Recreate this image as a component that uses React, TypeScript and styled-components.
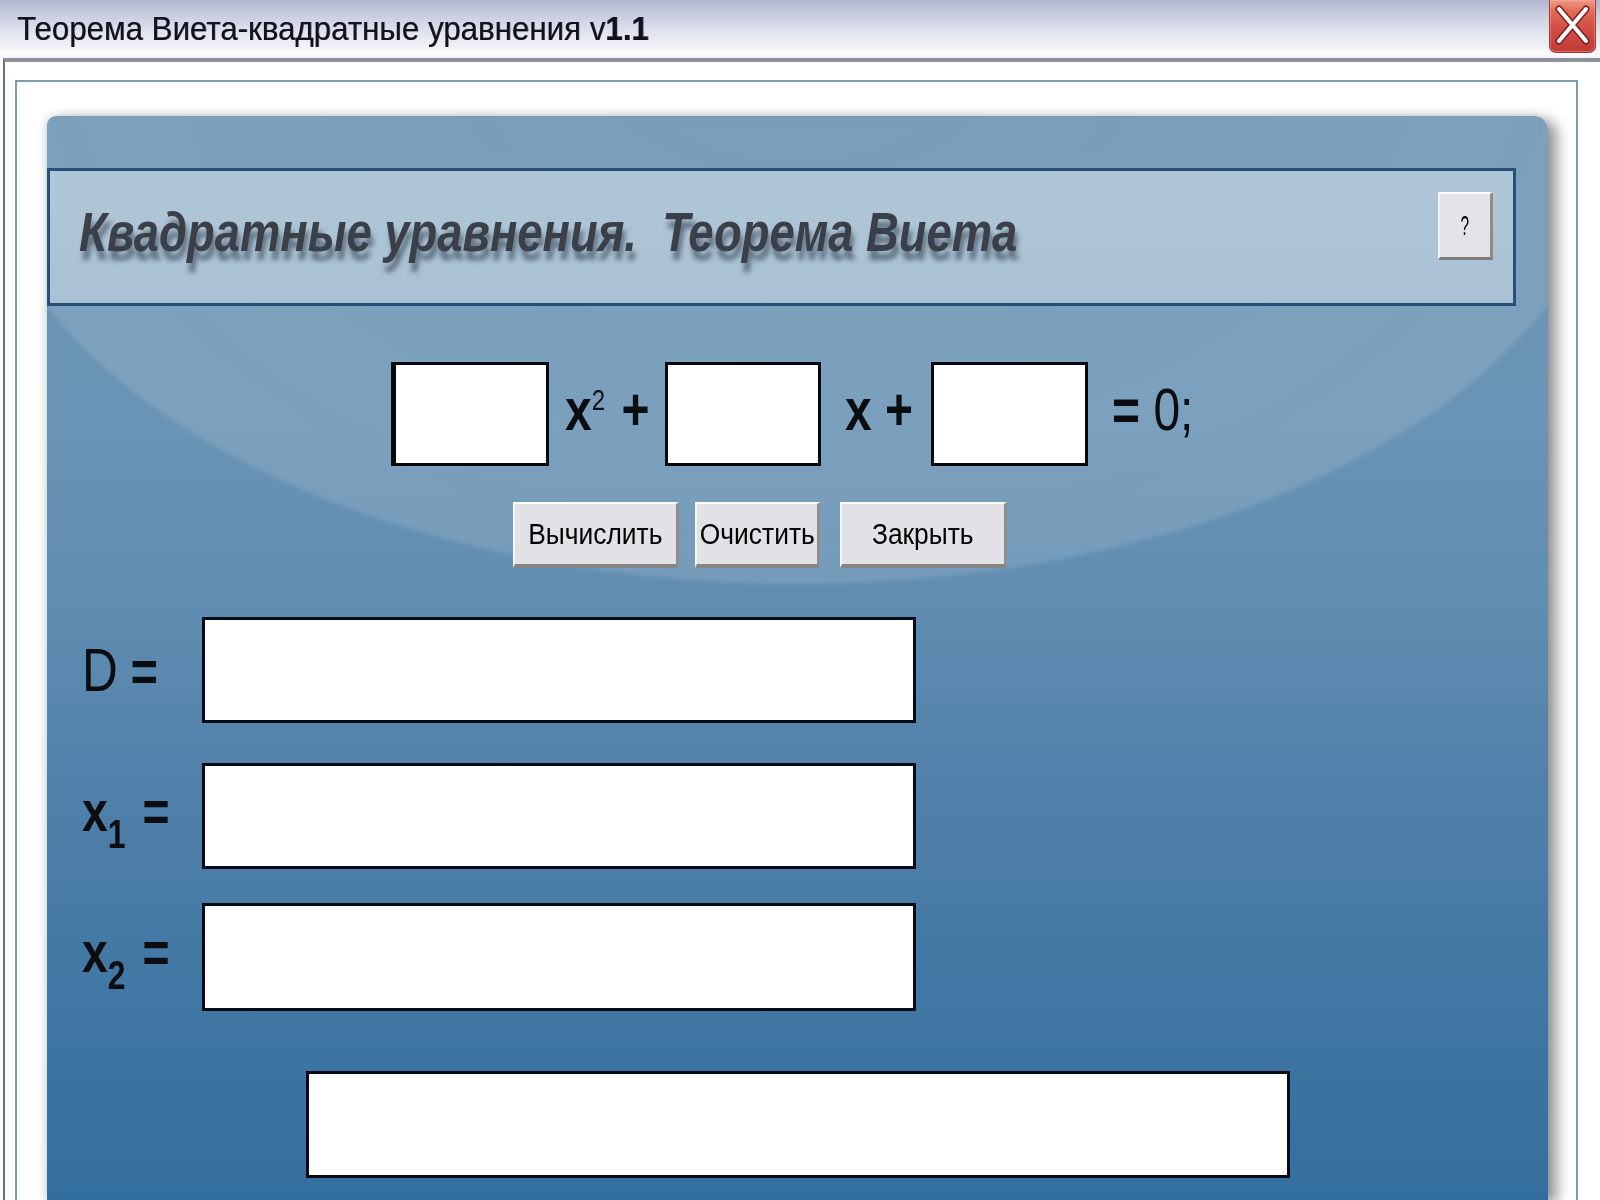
import { createGlobalStyle, styled } from "styled-components";

const GlobalStyle = createGlobalStyle`
  html, body {
    margin: 0;
    padding: 0;
    background: #ffffff;
  }
  body {
    font-family: "Liberation Sans", Arial, sans-serif;
  }
`;

function App() {
  return (
    <Window>
      <GlobalStyle />
      <TitleBar>
        <Caption>
          <Narrow $sx={0.92}>
            Теорема Виета-квадратные уравнения v<b>1.1</b>
          </Narrow>
        </Caption>
        <CloseButton>
          <svg width="45" height="52" viewBox="0 0 45 52">
            <path d="M9 9 L36 41 M36 9 L9 41" stroke="#7c2420" strokeWidth="7" strokeLinecap="round" />
            <path d="M9 9 L36 41 M36 9 L9 41" stroke="#ffffff" strokeWidth="4" strokeLinecap="round" />
          </svg>
        </CloseButton>
      </TitleBar>
      <Body>
        <Frame>
          <Panel>
            <Header>
              <HeaderTitle>
                <Narrow $sx={0.825}>Квадратные уравнения.  Теорема Виета</Narrow>
              </HeaderTitle>
              <HelpButton>
                <Narrow $sx={0.55} $origin="center">?</Narrow>
              </HelpButton>
            </Header>

            <EqRow>
              <CoefBox $w={158} $left={5} />
              <Term $w={116} $pl={16}>
                <Narrow $sx={0.8}>
                  x<Sup>2</Sup> <Plus>+</Plus>
                </Narrow>
              </Term>
              <CoefBox $w={156} />
              <Term $w={110} $pl={24}>
                <Narrow $sx={0.8}>x +</Narrow>
              </Term>
              <CoefBox $w={157} />
              <Term $pl={24}>
                <Narrow $sx={0.8}>
                  = <Light>0;</Light>
                </Narrow>
              </Term>
            </EqRow>

            <ButtonRow>
              <PushButton $w={166}>
                <Narrow $sx={0.88} $origin="center">Вычислить</Narrow>
              </PushButton>
              <PushButton $w={125} $ml={16}>
                <Narrow $sx={0.88} $origin="center">Очистить</Narrow>
              </PushButton>
              <PushButton $w={167} $ml={20}>
                <Narrow $sx={0.88} $origin="center">Закрыть</Narrow>
              </PushButton>
            </ButtonRow>

            <ResultRow $mt={49}>
              <Label>
                <Narrow $sx={0.8}>
                  <Light $size={62}>D</Light> =
                </Narrow>
              </Label>
              <ResultBox />
            </ResultRow>
            <ResultRow $mt={40}>
              <Label $lift>
                <Narrow $sx={0.8}>
                  x<Sub>1</Sub> <Eq>=</Eq>
                </Narrow>
              </Label>
              <ResultBox />
            </ResultRow>
            <ResultRow $mt={34}>
              <Label $lift>
                <Narrow $sx={0.8}>
                  x<Sub>2</Sub> <Eq>=</Eq>
                </Narrow>
              </Label>
              <ResultBox $h={108} />
            </ResultRow>

            <MessageBox />
          </Panel>
        </Frame>
      </Body>
    </Window>
  );
}

const Window = styled.div`
  width: 1600px;
  height: 1200px;
  overflow: hidden;
  display: flex;
  flex-direction: column;
  background: #ffffff;
`;

const Narrow = styled.span<{ $sx?: number; $origin?: string }>`
  display: inline-block;
  white-space: pre;
  transform: scaleX(${(p) => p.$sx ?? 0.82});
  transform-origin: ${(p) => p.$origin ?? "left"} center;
`;

const TitleBar = styled.header`
  flex: none;
  height: 58px;
  box-sizing: border-box;
  padding-left: 17px;
  display: flex;
  justify-content: space-between;
  align-items: flex-start;
  background: linear-gradient(
    #b1b5cd 0%,
    #c9cce0 25%,
    #e4e6ef 60%,
    #f6f6fa 88%,
    #ffffff 91%,
    #f4f4f6 100%
  );
`;

const Caption = styled.div`
  margin-top: 11px;
  font-size: 34px;
  line-height: 1;
  color: #12121a;
  text-shadow: 0.6px 0 0 rgba(40, 40, 90, 0.7);
  b {
    font-weight: 700;
  }
`;

const CloseButton = styled.div`
  width: 45px;
  height: 52px;
  margin-right: 4px;
  border: 1px solid #a8362f;
  border-top: none;
  border-radius: 0 0 7px 7px;
  background: linear-gradient(#ef9a84 0%, #e06a58 22%, #d24c44 55%, #c13a36 100%);
  box-shadow: inset 0 0 0 1px rgba(255, 200, 180, 0.35);
  svg {
    display: block;
  }
`;

const Body = styled.main`
  flex: 1;
  min-height: 0;
  display: flex;
  margin-left: 3px;
  border-left: 2px solid #6b7182;
  border-top: 4px solid #8f93a0;
  padding: 18px 22px 0 10px;
`;

const Frame = styled.section`
  flex: 1;
  display: flex;
  flex-direction: column;
  border: 2px solid #7d9cb4;
  border-bottom: none;
  padding: 34px 28px 0 30px;
`;

const Panel = styled.div`
  flex: 1;
  position: relative;
  z-index: 0;
  overflow: hidden;
  display: flex;
  flex-direction: column;
  border-radius: 9px 14px 0 0;
  background: linear-gradient(
    #6b93b2 0px,
    #6a94b5 300px,
    #618db1 480px,
    #4e7fa9 700px,
    #3f76a3 900px,
    #336f9e 1084px
  );
  box-shadow: 9px 4px 14px rgba(0, 0, 0, 0.42), -3px 0 8px rgba(0, 0, 0, 0.12);

  &::before {
    content: "";
    position: absolute;
    z-index: -1;
    left: -70px;
    top: -464px;
    width: 1640px;
    height: 932px;
    border-radius: 50%;
    background: radial-gradient(
      ellipse at 50% 40%,
      rgba(255, 255, 255, 0.1) 0%,
      rgba(255, 255, 255, 0.13) 80%,
      rgba(255, 255, 255, 0.2) 97%,
      rgba(255, 255, 255, 0.05) 100%
    );
    filter: blur(2px);
  }
`;

const Header = styled.div`
  flex: none;
  height: 138px;
  box-sizing: border-box;
  margin: 52px 32px 0 0;
  padding: 0 20px 10px 29px;
  display: flex;
  align-items: center;
  justify-content: space-between;
  border: 3px solid #24507a;
  background: linear-gradient(#b0c7d8, #a9c1d3);
`;

const HeaderTitle = styled.h1`
  margin: 0;
  font-size: 55px;
  font-weight: 700;
  font-style: italic;
  line-height: 1;
  color: #3b3f47;
  text-shadow: 3px 9px 6px rgba(30, 42, 58, 0.55);
`;

const HelpButton = styled.div`
  align-self: flex-start;
  margin-top: 21px;
  width: 55px;
  height: 68px;
  box-sizing: border-box;
  display: flex;
  align-items: center;
  justify-content: center;
  background: #e3e3e8;
  border-top: 2px solid #ffffff;
  border-left: 2px solid #f4f4f4;
  border-right: 3px solid #8d8d8d;
  border-bottom: 3px solid #7c7c7c;
  font-size: 28px;
  color: #000000;
`;

const EqRow = styled.div`
  flex: none;
  display: flex;
  align-items: center;
  height: 104px;
  margin-top: 56px;
  padding-left: 344px;
`;

const CoefBox = styled.div<{ $w: number; $left?: number }>`
  flex: none;
  width: ${(p) => p.$w}px;
  height: 104px;
  box-sizing: border-box;
  background: #ffffff;
  border: 3px solid #06080c;
  border-left-width: ${(p) => p.$left ?? 3}px;
`;

const Term = styled.div<{ $w?: number; $pl: number }>`
  flex: none;
  width: ${(p) => (p.$w ? `${p.$w}px` : "auto")};
  box-sizing: border-box;
  padding-left: ${(p) => p.$pl}px;
  padding-bottom: 8px;
  font-size: 60px;
  font-weight: 700;
  line-height: 1;
  color: #0b0d10;
`;

const Sup = styled.span`
  position: relative;
  top: -20px;
  font-size: 30px;
  font-weight: 400;
  line-height: 0;
`;

const Plus = styled.span`
  margin-left: 4px;
`;

const Light = styled.span<{ $size?: number }>`
  font-weight: 400;
  font-size: ${(p) => (p.$size ? `${p.$size}px` : "inherit")};
`;

const ButtonRow = styled.div`
  flex: none;
  display: flex;
  margin-top: 36px;
  padding-left: 466px;
`;

const PushButton = styled.div<{ $w: number; $ml?: number }>`
  flex: none;
  width: ${(p) => p.$w}px;
  height: 66px;
  margin-left: ${(p) => p.$ml ?? 0}px;
  box-sizing: border-box;
  display: flex;
  align-items: center;
  justify-content: center;
  background: #e2e2e6;
  border-top: 2px solid #ffffff;
  border-left: 2px solid #f6f6f6;
  border-right: 3px solid #8e8e8e;
  border-bottom: 4px solid #858585;
  font-size: 30px;
  color: #000000;
`;

const ResultRow = styled.div<{ $mt: number }>`
  flex: none;
  display: flex;
  align-items: center;
  margin-top: ${(p) => p.$mt}px;
  padding-left: 35px;
`;

const Label = styled.div<{ $lift?: boolean }>`
  flex: none;
  width: 120px;
  padding-bottom: ${(p) => (p.$lift ? 10 : 0)}px;
  font-size: 58px;
  font-weight: 700;
  line-height: 1;
  color: #0b0d10;
`;

const Sub = styled.span`
  position: relative;
  top: 17px;
  font-size: 40px;
  font-weight: 700;
  line-height: 0;
`;

const Eq = styled.span`
  margin-left: 5px;
`;

const ResultBox = styled.div<{ $h?: number }>`
  flex: none;
  width: 714px;
  height: ${(p) => p.$h ?? 106}px;
  box-sizing: border-box;
  background: #ffffff;
  border: 3px solid #050a14;
`;

const MessageBox = styled.div`
  flex: none;
  width: 984px;
  height: 107px;
  box-sizing: border-box;
  margin: 60px 0 0 259px;
  background: #ffffff;
  border: 3px solid #050a14;
`;

export default App;
